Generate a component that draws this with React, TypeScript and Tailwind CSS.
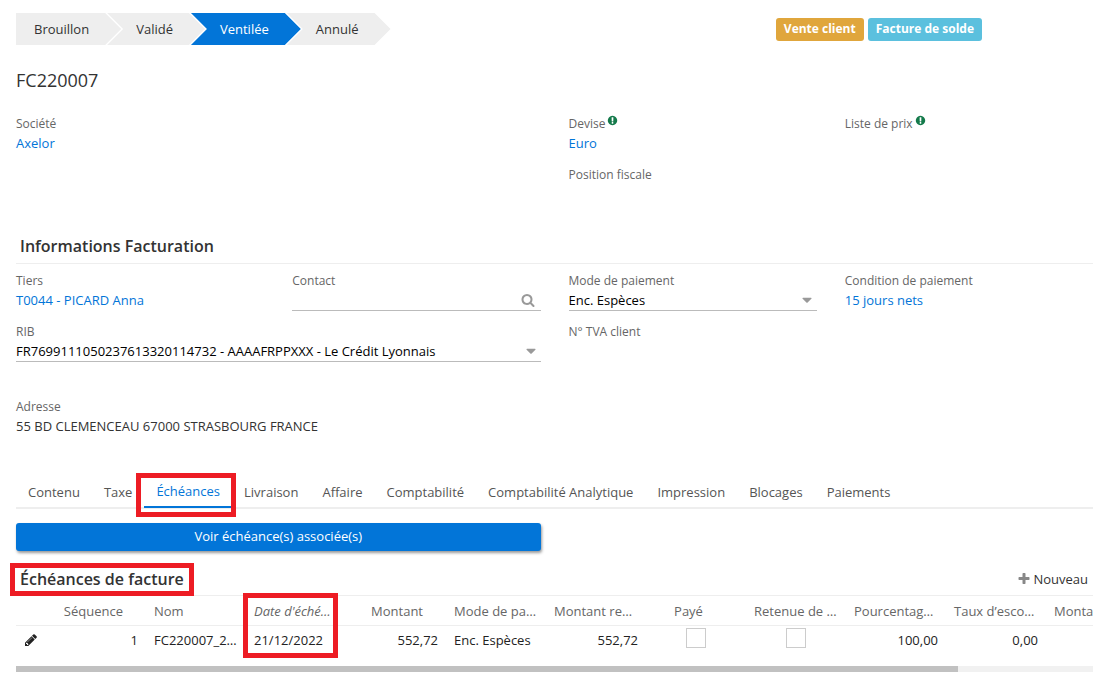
import React, { useState } from 'react';

const tabs = [
  'Contenu',
  'Taxe',
  'Échéances',
  'Livraison',
  'Affaire',
  'Comptabilité',
  'Comptabilité Analytique',
  'Impression',
  'Blocages',
  'Paiements',
];

const steps = ['Brouillon', 'Validé', 'Ventilée', 'Annulé'];

const firstStep = 'pl-[18px] [clip-path:polygon(0_0,calc(100%-16px)_0,100%_50%,calc(100%-16px)_100%,0_100%)]';
const nextStep =
  '-ml-[14px] pl-[29px] [clip-path:polygon(0_0,calc(100%-16px)_0,100%_50%,calc(100%-16px)_100%,0_100%,16px_50%)]';

const icons = {
  plus: 'M1600 736v192q0 40-28 68t-68 28h-416v416q0 40-28 68t-68 28h-192q-40 0-68-28t-28-68v-416h-416q-40 0-68-28t-28-68v-192q0-40 28-68t68-28h416v-416q0-40 28-68t68-28h192q40 0 68 28t28 68v416h416q40 0 68 28t28 68z',
  search:
    'M1216 832q0-185-131.5-316.5t-316.5-131.5-316.5 131.5-131.5 316.5 131.5 316.5 316.5 131.5 316.5-131.5 131.5-316.5zm512 832q0 52-38 90t-90 38q-54 0-90-38l-343-342q-179 124-399 124-143 0-273.5-55.5t-225-150-150-225-55.5-273.5 55.5-273.5 150-225 225-150 273.5-55.5 273.5 55.5 225 150 150 225 55.5 273.5q0 220-124 399l343 343q37 37 37 90z',
  hint: 'M896 128q209 0 385.5 103t279.5 279.5 103 385.5-103 385.5-279.5 279.5-385.5 103-385.5-103-279.5-279.5-103-385.5 103-385.5 279.5-279.5 385.5-103zm128 1247v-190q0-14-9-23.5t-22-9.5h-192q-13 0-23 10t-10 23v190q0 13 10 23t23 10h192q13 0 22-9.5t9-23.5zm-2-344l18-621q0-12-10-18-10-8-24-8h-220q-14 0-24 8-10 6-10 18l17 621q0 10 10 17.5t24 7.5h185q14 0 23.5-7.5t10.5-17.5z',
  pencil:
    'M491 1536l91-91-235-235-91 91v107h128v128h107zm523-928q0-22-22-22-10 0-17 7l-542 542q-7 7-7 17 0 22 22 22 10 0 17-7l542-542q7-7 7-17zm-54-192l416 416-832 832h-416v-416zm683 96q0 53-37 90l-166 166-416-416 166-165q36-38 90-38 53 0 91 38l235 234q37 39 37 91z',
  caret:
    'M1408 704q0 26-19 45l-448 448q-19 19-45 19t-45-19l-448-448q-19-19-19-45t19-45 45-19h896q26 0 45 19t19 45z',
};

function Icon({ name, className }: { name: keyof typeof icons; className: string }) {
  return (
    <svg viewBox="0 0 1792 1792" fill="currentColor" aria-hidden="true" className={className}>
      <path d={icons[name]} />
    </svg>
  );
}

function Label({ children, htmlFor, hint }: { children: React.ReactNode; htmlFor?: string; hint?: boolean }) {
  return (
    <label htmlFor={htmlFor} className="flex h-5 items-center gap-0.5 pt-0.5 text-xs leading-5 text-[#666]">
      {children}
      {hint && <Icon name="hint" className="mb-2 size-[11px] text-[#147a4b]" />}
    </label>
  );
}

function LinkField({ label, value, hint }: { label: string; value?: string; hint?: boolean }) {
  return (
    <div className="h-[41px]">
      <Label hint={hint}>{label}</Label>
      {value && (
        <a href="#" className="block h-5 text-[#0275d8]">
          {value}
        </a>
      )}
    </div>
  );
}

function SelectField({ id, label, value }: { id: string; label: string; value: string }) {
  return (
    <div>
      <Label htmlFor={id}>{label}</Label>
      <div className="relative">
        <select id={id} className="block h-[21px] w-full appearance-none border-b border-[#bbb] bg-white pr-6 text-black outline-none">
          <option>{value}</option>
        </select>
        <Icon name="caret" className="pointer-events-none absolute right-0.5 top-0.5 size-4 text-[#999]" />
      </div>
    </div>
  );
}

// red frame drawn over the parts to look at
function Highlight({ className }: { className: string }) {
  return <span className={`pointer-events-none absolute z-10 border-[5px] border-[#ed1c24] ${className}`} />;
}

export default function App() {
  const [activeTab, setActiveTab] = useState('Échéances');

  return (
    <main className="min-h-screen bg-white pb-3 pl-4 pr-3 pt-[13px] font-['Open_Sans',sans-serif] text-[13px] leading-5 text-[#333]">
      <div className="flex items-center">
        <ol className="flex">
          {steps.map((step, i) => (
            <li
              key={step}
              className={`flex h-8 items-center pr-8 ${i === 0 ? firstStep : nextStep} ${
                step === 'Ventilée' ? 'bg-[#0275d8] text-white' : 'bg-[#eee]'
              }`}
            >
              {step}
            </li>
          ))}
        </ol>
        <div className="ml-auto mr-[111px] flex gap-1 text-xs font-bold leading-[22px] text-white">
          <span className="h-[23px] rounded-[3px] bg-[#e0a63c] px-2">Vente client</span>
          <span className="h-[23px] rounded-[3px] bg-[#5bc0de] px-2">Facture de solde</span>
        </div>
      </div>

      <h1 className="mt-[23px] text-lg font-medium leading-6">FC220007</h1>

      <section className="mt-[21px] grid grid-cols-4 gap-x-7 gap-y-2.5">
        <div className="col-span-2">
          <LinkField label="Société" value="Axelor" />
        </div>
        <LinkField label="Devise" value="Euro" hint />
        <LinkField label="Liste de prix" hint />
        <div className="col-start-3">
          <LinkField label="Position fiscale" />
        </div>
      </section>

      <section className="mt-6">
        <h2 className="h-[35px] border-b border-[#eee] px-1 pt-[5px] text-base font-semibold leading-6">
          Informations Facturation
        </h2>
        <div className="mt-1.5 grid grid-cols-4 gap-x-7 gap-y-2.5">
          <LinkField label="Tiers" value="T0044 - PICARD Anna" />
          <div>
            <Label htmlFor="contact">Contact</Label>
            <div className="flex h-[21px] items-center border-b border-[#bbb]">
              <input id="contact" type="text" className="h-full min-w-0 flex-1 outline-none" />
              <button type="button" aria-label="Rechercher" className="pr-1.5 text-[#999]">
                <Icon name="search" className="size-3.5" />
              </button>
            </div>
          </div>
          <SelectField id="mode" label="Mode de paiement" value="Enc. Espèces" />
          <LinkField label="Condition de paiement" value="15 jours nets" />
          <div className="col-span-2">
            <SelectField id="rib" label="RIB" value="FR7699111050237613320114732 - AAAAFRPPXXX - Le Crédit Lyonnais" />
          </div>
          <LinkField label="N° TVA client" />
        </div>
        <div className="mt-[34px]">
          <Label>Adresse</Label>
          <p>55 BD CLEMENCEAU 67000 STRASBOURG FRANCE</p>
        </div>
      </section>

      <nav className="mt-[41px] flex h-8 border-b-2 border-[#eee]">
        {tabs.map((tab) => (
          <button
            key={tab}
            type="button"
            onClick={() => setActiveTab(tab)}
            className={`relative h-[31px] whitespace-nowrap px-3 pb-0.5 ${
              tab === activeTab ? 'border-b-2 border-[#0275d8] font-medium text-[#0275d8]' : 'text-[#555]'
            }`}
          >
            {tab}
            {tab === 'Échéances' && <Highlight className="-bottom-[11px] -left-2 -right-1 -top-1" />}
          </button>
        ))}
      </nav>

      <div className="mt-3.5 grid grid-cols-4 gap-x-7">
        <button
          type="button"
          className="col-span-2 h-7 rounded-[3px] bg-[#0275d8] pb-0.5 font-medium text-white shadow-[1px_2px_3px_rgba(0,0,0,0.4)]"
        >
          Voir échéance(s) associée(s)
        </button>
      </div>

      <section className="mt-[11px]">
        <div className="flex h-[33px] items-center justify-between">
          <h2 className="relative px-1 text-base font-semibold leading-6">
            Échéances de facture
            <Highlight className="-left-1.5 -right-1.5 -top-1 h-[33px]" />
          </h2>
          <button type="button" className="flex items-center gap-0.5 pr-[5px]">
            <Icon name="plus" className="size-3.5 text-[#888]" />
            Nouveau
          </button>
        </div>

        <div className="relative">
          <Highlight className="-top-0.5 left-[227px] h-[65px] w-[95px]" />
          <div className="overflow-hidden">
            <table className="w-[1230px] table-fixed text-left text-[#222]">
              <colgroup>
                <col className="w-[30px]" />
                {Array.from({ length: 12 }, (_, i) => (
                  <col key={i} className="w-[100px]" />
                ))}
              </colgroup>
              <thead>
                <tr className="h-[30px] whitespace-nowrap border-y border-[#eee] text-[#666] [&>th]:px-2 [&>th]:font-normal">
                  <th />
                  <th>
                    <span className="block pr-[15px] text-right">Séquence</span>
                  </th>
                  <th>Nom</th>
                  <th className="italic" title="Date d'échéance">Date d'éché…</th>
                  <th>
                    <span className="block pr-[15px] text-right">Montant</span>
                  </th>
                  <th title="Mode de paiement">Mode de pa…</th>
                  <th title="Montant restant à payer">Montant re…</th>
                  <th>
                    <span className="block pr-[15px] text-center">Payé</span>
                  </th>
                  <th title="Retenue de garantie">Retenue de …</th>
                  <th title="Pourcentage">Pourcentag…</th>
                  <th title="Taux d’escompte">Taux d’esco…</th>
                  <th>Montant</th>
                  <th />
                </tr>
              </thead>
              <tbody>
                <tr className="h-[29px] whitespace-nowrap [&>td]:px-2">
                  <td>
                    <Icon name="pencil" className="size-3.5" />
                  </td>
                  <td className="text-right">1</td>
                  <td>FC220007_2…</td>
                  <td>21/12/2022</td>
                  <td className="text-right">552,72</td>
                  <td>Enc. Espèces</td>
                  <td className="text-right">552,72</td>
                  <td>
                    <input
                      type="checkbox"
                      aria-label="Payé"
                      className="mx-auto mb-1 block size-5 appearance-none border border-[#ccc]"
                    />
                  </td>
                  <td>
                    <input
                      type="checkbox"
                      aria-label="Retenue de garantie"
                      className="mx-auto mb-1 block size-5 appearance-none border border-[#ccc]"
                    />
                  </td>
                  <td className="text-right">100,00</td>
                  <td className="text-right">0,00</td>
                  <td />
                  <td />
                </tr>
              </tbody>
            </table>
          </div>
          <div className="mt-[11px] h-1.5 bg-[#f1f1f1]">
            <div className="h-full w-7/8 bg-[#c1c1c1]" />
          </div>
        </div>
      </section>
    </main>
  );
}
